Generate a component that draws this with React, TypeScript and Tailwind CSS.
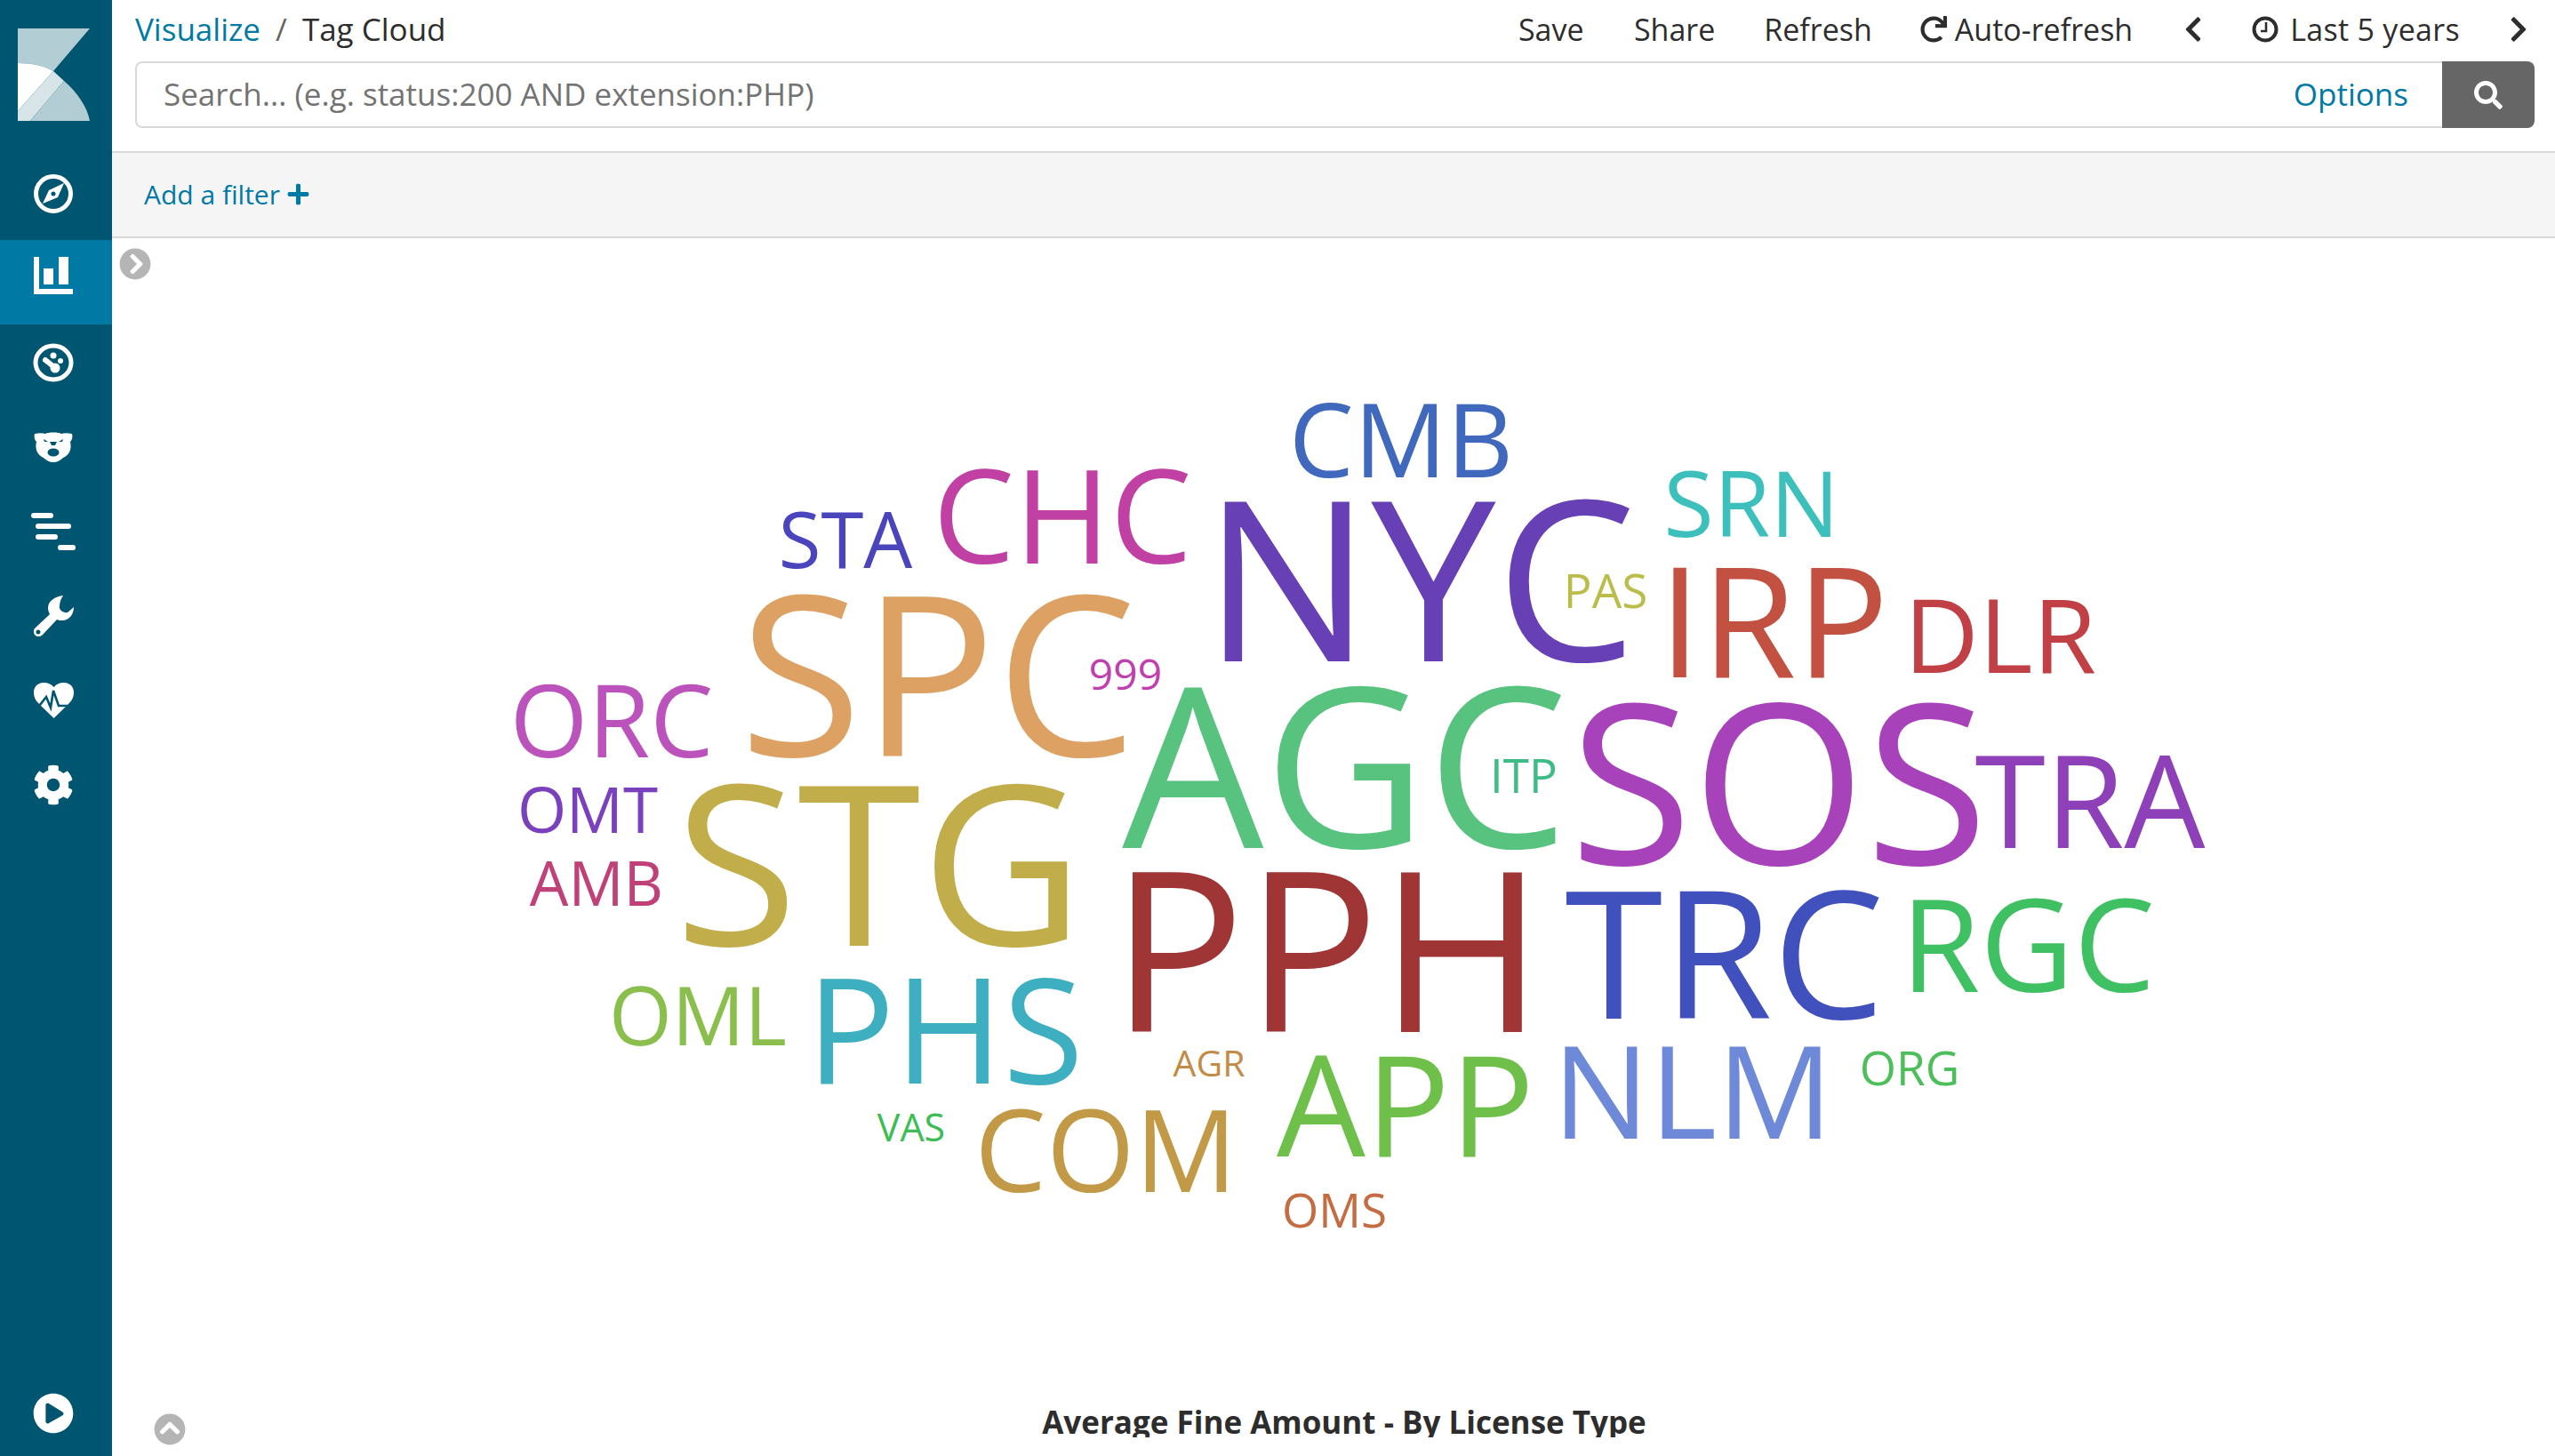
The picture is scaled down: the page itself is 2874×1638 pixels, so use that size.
import {
  FaChevronCircleRight,
  FaChevronCircleUp,
  FaChevronLeft,
  FaChevronRight,
  FaCog,
  FaPlayCircle,
  FaPlus,
  FaRedo,
  FaSearch,
} from 'react-icons/fa';

// x = ink centre, y = baseline, s = font size, all in page pixels
const words = [
  { t: 'CMB', x: 1576, y: 537, s: 116, c: '#4069bd' },
  { t: 'STA', x: 951, y: 639, s: 87, c: '#4a44bd' },
  { t: 'CHC', x: 1195, y: 634, s: 146, c: '#c040a4' },
  { t: 'SRN', x: 1970, y: 604, s: 103, c: '#3dc0bc' },
  { t: 'NYC', x: 1597, y: 744, s: 251, c: '#6740b6' },
  { t: 'PAS', x: 1806, y: 684, s: 53, c: '#bbbd4a' },
  { t: 'IRP', x: 1995, y: 762, s: 173, c: '#c25142' },
  { t: 'DLR', x: 2250, y: 757, s: 116, c: '#c04045' },
  { t: 'SPC', x: 1055, y: 851, s: 251, c: '#dca163' },
  { t: '999', x: 1266, y: 776, s: 48, c: '#c03ead' },
  { t: 'ORC', x: 688, y: 852, s: 113, c: '#bc53bc' },
  { t: 'AGC', x: 1513, y: 954, s: 252, c: '#58c27f' },
  { t: 'ITP', x: 1714, y: 892, s: 53, c: '#3dbd85' },
  { t: 'SOS', x: 2001, y: 973, s: 251, c: '#a842bb' },
  { t: 'TRA', x: 2351, y: 954, s: 144, c: '#8d40b8' },
  { t: 'OMT', x: 661, y: 937, s: 71, c: '#7b40bd' },
  { t: 'STG', x: 989, y: 1064, s: 252, c: '#c1ae4a' },
  { t: 'AMB', x: 671, y: 1019, s: 69, c: '#c04078' },
  { t: 'PPH', x: 1493, y: 1161, s: 251, c: '#a03535' },
  { t: 'TRC', x: 1940, y: 1146, s: 200, c: '#4051bd' },
  { t: 'RGC', x: 2281, y: 1116, s: 145, c: '#3fc062' },
  { t: 'OML', x: 785, y: 1176, s: 91, c: '#8bbf4d' },
  { t: 'PHS', x: 1063, y: 1219, s: 165, c: '#3eafc0' },
  { t: 'AGR', x: 1360, y: 1211, s: 41, c: '#c28c47' },
  { t: 'APP', x: 1581, y: 1301, s: 158, c: '#6fc04a' },
  { t: 'NLM', x: 1904, y: 1281, s: 145, c: '#6f89d9' },
  { t: 'ORG', x: 2148, y: 1221, s: 53, c: '#4dbf5a' },
  { t: 'VAS', x: 1025, y: 1284, s: 43, c: '#3dbd55' },
  { t: 'COM', x: 1244, y: 1341, s: 128, c: '#c29a47' },
  { t: 'OMS', x: 1501, y: 1381, s: 53, c: '#c46c42' },
];

function Logo() {
  return (
    <svg width="81" height="104" viewBox="20 32 81 104" className="block">
      <path d="M20 32H101L60 80C50 74 36 71 20 71Z" fill="#b2cdd4" />
      <path d="M20 71C36 71 50 74 60 80L20 125Z" fill="#ffffff" />
      <path d="M60 80L72 91L34 136H20V125Z" fill="#d8e5e8" />
      <path d="M72 91C87 104 98 120 101 136H34Z" fill="#b2cdd4" />
    </svg>
  );
}

function CompassIcon() {
  return (
    <svg width="44" height="44" viewBox="0 0 44 44">
      <circle cx="22" cy="22" r="19.5" fill="none" stroke="#fff" strokeWidth="5" />
      <path
        fillRule="evenodd"
        d="M34 10L27 26L10 33L17 18ZM22 19.5A2.5 2.5 0 1 0 22 24.5A2.5 2.5 0 1 0 22 19.5Z"
        fill="#fff"
      />
    </svg>
  );
}

function BarsIcon() {
  return (
    <svg width="44" height="42" viewBox="0 0 44 42" fill="#fff" className="-mt-[6px]">
      <rect x="0" y="0" width="6" height="42" />
      <rect x="0" y="36" width="44" height="6" />
      <rect x="11" y="13" width="11" height="18" />
      <rect x="28" y="0" width="11" height="31" />
    </svg>
  );
}

function DialIcon() {
  return (
    <svg width="46" height="44" viewBox="0 0 46 44" fill="none">
      <ellipse cx="23" cy="22" rx="20" ry="19" stroke="#fff" strokeWidth="5" />
      <circle cx="23" cy="14" r="3.5" fill="#fff" />
      <circle cx="31" cy="20" r="3" fill="#fff" />
      <path d="M14 19L24 27" stroke="#fff" strokeWidth="6" strokeLinecap="round" />
      <circle cx="25" cy="28" r="5.5" fill="#fff" />
    </svg>
  );
}

function BearIcon() {
  return (
    <svg width="44" height="36" viewBox="0 0 44 36">
      <path
        d="M1 3C6 2 10 2 13 3C16 1 28 1 31 3C34 2 38 2 43 3C44 7 43 10 41 12C43 20 40 27 33 30C30 33 26 35 22 35C18 35 14 33 11 30C4 27 1 20 3 12C1 10 0 7 1 3Z"
        fill="#fff"
      />
      <path d="M11 9L16 12L12 12Z M33 9L28 12L32 12Z" fill="#005571" />
      <path d="M18 12H26L24 16H20Z" fill="#005571" />
      <ellipse cx="22" cy="24" rx="6.5" ry="4.5" fill="#005571" />
    </svg>
  );
}

function LinesIcon() {
  return (
    <div className="flex w-[50px] flex-col gap-[6px]">
      <div className="h-[6px] w-[25px] rounded-full bg-white" />
      <div className="ml-[5px] h-[6px] w-[40px] rounded-full bg-white" />
      <div className="ml-[5px] h-[6px] w-[25px] rounded-full bg-white" />
      <div className="ml-[30px] h-[6px] w-[20px] rounded-full bg-white" />
    </div>
  );
}

function WrenchIcon() {
  return (
    <svg width="45" height="46" viewBox="0 0 45 46">
      <path
        fillRule="evenodd"
        fill="#fff"
        d="M33 0C24 1 16 6 16 14C16 17 17 19 18 21L1 37C-1 40 0 43 2 45C5 47 8 46 10 44L26 27C28 28 30 28 32 28C40 28 45 21 45 13L38 19C33 20 28 16 29 12C29 7 31 3 33 0ZM5 38.5A2.5 2.5 0 1 0 5 43.5A2.5 2.5 0 1 0 5 38.5Z"
      />
    </svg>
  );
}

function HeartIcon() {
  return (
    <svg width="45" height="40" viewBox="0 0 45 40">
      <path
        fill="#fff"
        d="M22.5 5C19 1 15 0 11 0C4 0 0 5 0 11C0 17 3 21 6 24L22.5 40L39 24C42 21 45 17 45 11C45 5 41 0 34 0C30 0 26 1 22.5 5Z"
      />
      <path
        d="M0 25H7L14 16L19 28L22 9L28 26H45"
        fill="none"
        stroke="#005571"
        strokeWidth="2.6"
      />
    </svg>
  );
}

function ClockIcon() {
  return (
    <svg width="30" height="30" viewBox="0 0 30 30" fill="none" stroke="currentColor">
      <circle cx="15" cy="15" r="12.5" strokeWidth="4" />
      <path d="M16 7V17H10" strokeWidth="2.6" />
    </svg>
  );
}

const navItems = [
  { id: 'discover', icon: <CompassIcon /> },
  { id: 'visualize', icon: <BarsIcon />, active: true },
  { id: 'timelion', icon: <DialIcon /> },
  { id: 'ml', icon: <BearIcon /> },
  { id: 'apm', icon: <LinesIcon /> },
  { id: 'dev', icon: <WrenchIcon /> },
  { id: 'monitoring', icon: <HeartIcon /> },
  { id: 'management', icon: <FaCog size={46} color="#fff" /> },
];

function Sidebar() {
  return (
    <aside className="flex h-full w-[126px] shrink-0 flex-col bg-[#005571]">
      <div className="h-[175px] pl-[20px] pt-[32px]">
        <Logo />
      </div>
      {navItems.map((item) => (
        <div
          key={item.id}
          className={`flex h-[95px] items-start justify-center pr-[6px] pt-[20px] ${item.active ? 'bg-[#0079a5]' : ''}`}
        >
          <div className="flex h-[46px] items-center justify-center">{item.icon}</div>
        </div>
      ))}
      <div className="mt-auto flex justify-center pb-[25px] pr-[6px]">
        <FaPlayCircle size={46} color="#fff" />
      </div>
    </aside>
  );
}

function TopBar() {
  return (
    <header className="h-[172px] shrink-0 border-b-2 border-[#d9d9d9] bg-white pl-[26px] pr-[23px]">
      <div className="flex h-[69px] items-center justify-between pb-[3px] text-[34px] text-[#2d2d2d]">
        <div className="flex items-center text-[35px]">
          <span className="text-[#0079a5]">Visualize</span>
          <span className="mx-[17px] text-[#666]">/</span>
          <span>Tag Cloud</span>
        </div>
        <div className="flex items-center">
          <span className="w-[76px]">Save</span>
          <span className="ml-[54px]">Share</span>
          <span className="ml-[55px]">Refresh</span>
          <span className="ml-[54px] flex items-center gap-[9px]">
            <FaRedo size={30} />
            Auto-refresh
          </span>
          <FaChevronLeft size={32} className="ml-[52px]" />
          <span className="ml-[50px] flex items-center gap-[13px]">
            <ClockIcon />
            <span className="tracking-[0.3px]">Last 5 years</span>
          </span>
          <FaChevronRight size={32} className="ml-[50px] mr-[2px]" />
        </div>
      </div>
      <div className="flex h-[75px]">
        <div className="flex flex-1 items-center justify-between rounded-l-[8px] border-2 border-r-0 border-[#d9d9d9] pl-[30px] pr-[38px] text-[35px]">
          <span className="text-[#737373]">Search... (e.g. status:200 AND extension:PHP)</span>
          <span className="text-[#0079a5]">Options</span>
        </div>
        <div className="flex w-[104px] items-center justify-center rounded-r-[8px] bg-[#666666]">
          <FaSearch size={32} color="#fff" />
        </div>
      </div>
    </header>
  );
}

function FilterBar() {
  return (
    <div className="flex h-[96px] shrink-0 items-center gap-[7px] border-b-2 border-[#d9d9d9] bg-[#f5f5f5] pb-[2px] pl-[36px] text-[30px] text-[#0079a5]">
      <span>Add a filter</span>
      <FaPlus size={27} />
    </div>
  );
}

function TagCloud() {
  return (
    <svg viewBox="126 268 2748 1312" className="block h-[1312px] w-[2748px]">
      {words.map((w) => (
        <text
          key={w.t}
          x={w.x}
          y={w.y}
          fontSize={w.s}
          fill={w.c}
          textAnchor="middle"
          fontFamily="'Open Sans', sans-serif"
        >
          {w.t}
        </text>
      ))}
    </svg>
  );
}

export default function App() {
  return (
    <div className="flex h-screen overflow-hidden bg-white font-['Open_Sans',sans-serif]">
      <Sidebar />
      <main className="relative flex min-w-0 flex-1 flex-col">
        <TopBar />
        <FilterBar />
        <div className="flex-1 overflow-hidden">
          <TagCloud />
          <div className="h-[37px] overflow-hidden pl-[24px] text-center text-[35px] font-bold leading-[40px] text-[#2d2d2d]">
            Average Fine Amount - By License Type
          </div>
        </div>
        <FaChevronCircleRight size={36} color="#b5b5b5" className="absolute left-[8px] top-[279px]" />
        <FaChevronCircleUp size={36} color="#b5b5b5" className="absolute bottom-[12px] left-[47px]" />
      </main>
    </div>
  );
}
